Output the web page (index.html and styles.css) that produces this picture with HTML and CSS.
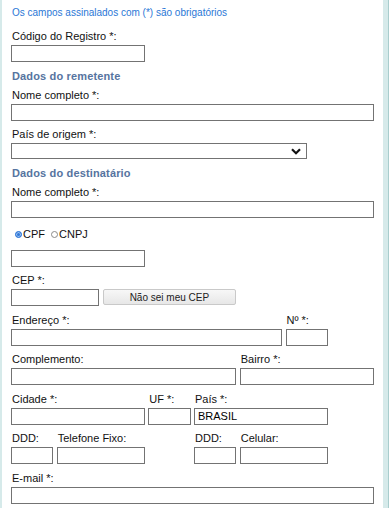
FILE: index.html
```html
<!DOCTYPE html>
<html lang="pt-BR">
<head>
    <meta charset="UTF-8">
    <meta name="viewport" content="width=device-width, initial-scale=1.0">
    <title>Registro</title>
    <link rel="stylesheet" href="styles.css">
</head>
<body>
    <div class="panel">
        <p class="note">Os campos assinalados com (*) são obrigatórios</p>

        <form class="form">
            <div class="field span3 first">
                <label>Código do Registro *:</label>
                <input type="text">
            </div>

            <h3 class="section">Dados do remetente</h3>

            <div class="field span8 first">
                <label>Nome completo *:</label>
                <input type="text">
            </div>

            <div class="field span8 first">
                <label>País de origem *:</label>
                <div class="select-wrap">
                    <select><option></option></select>
                    <svg class="chevron" width="10" height="7" viewBox="0 0 10 7"><path d="M1 1.2 L5 5.2 L9 1.2" fill="none" stroke="#111" stroke-width="2.2"/></svg>
                </div>
            </div>

            <h3 class="section">Dados do destinatário</h3>

            <div class="field span8 first">
                <label>Nome completo *:</label>
                <input type="text">
            </div>

            <div class="radios">
                <label class="radio"><input type="radio" name="doc" checked>CPF</label>
                <label class="radio"><input type="radio" name="doc">CNPJ</label>
            </div>

            <div class="field span3 first">
                <input type="text">
            </div>

            <div class="field span2 first">
                <label>CEP *:</label>
                <input type="text">
            </div>
            <button type="button" class="btn-cep">Não sei meu CEP</button>

            <div class="field span6 first">
                <label>Endereço *:</label>
                <input type="text">
            </div>
            <div class="field span1 col7">
                <label>Nº *:</label>
                <input type="text">
            </div>

            <div class="field span5 first">
                <label>Complemento:</label>
                <input type="text">
            </div>
            <div class="field span3 col6">
                <label>Bairro *:</label>
                <input type="text">
            </div>

            <div class="field span3 first">
                <label>Cidade *:</label>
                <input type="text">
            </div>
            <div class="field span1 col4">
                <label>UF *:</label>
                <input type="text">
            </div>
            <div class="field span3 col5">
                <label>País *:</label>
                <input type="text" value="BRASIL">
            </div>

            <div class="field span1 first">
                <label>DDD:</label>
                <input type="text">
            </div>
            <div class="field span2 col2">
                <label>Telefone Fixo:</label>
                <input type="text">
            </div>
            <div class="field span1 col5">
                <label>DDD:</label>
                <input type="text">
            </div>
            <div class="field span2 col6">
                <label>Celular:</label>
                <input type="text">
            </div>

            <div class="field span8 first">
                <label>E-mail *:</label>
                <input type="text">
            </div>
        </form>
    </div>
</body>
</html>
```

FILE: styles.css
```css
body {
    margin: 0;
    background: #fff;
    font-family: "Liberation Sans", Arial, sans-serif;
    color: #111;
}

.panel {
    width: 388px;
    min-height: 508px;
    box-sizing: border-box;
    padding: 7px 0 0 9px;
    border-left: 2px solid #d6eaea;
    border-right: 5px solid #d6eaea;
    box-shadow: 1px 0 0 #a9cdcd;
}

.note {
    margin: 0 0 11px 1px;
    font-size: 10px;
    line-height: 12px;
    color: #2a77d6;
}

.form {
    display: grid;
    grid-template-columns: repeat(8, 45.75px);
    row-gap: 7.5px;
}

.span1 { grid-column-end: span 1; }
.span2 { grid-column-end: span 2; }
.span3 { grid-column-end: span 3; }
.span5 { grid-column-end: span 5; }
.span6 { grid-column-end: span 6; }
.span8 { grid-column-end: span 8; }
.first { grid-column-start: 1; }
.col2 { grid-column-start: 2; }
.col4 { grid-column-start: 4; }
.col5 { grid-column-start: 5; }
.col6 { grid-column-start: 6; }
.col7 { grid-column-start: 7; }

.field label {
    display: block;
    margin: 0 0 2px 1px;
    font-size: 11px;
    line-height: 13px;
    white-space: nowrap;
}

.field input,
.field select {
    display: block;
    width: calc(100% - 3.5px);
    height: 17px;
    box-sizing: border-box;
    margin: 0;
    padding: 0 3px;
    border: 1px solid #737373;
    border-radius: 0;
    background: #fff;
    font-family: inherit;
    font-size: 11px;
    color: #000;
    outline: none;
}

.select-wrap {
    position: relative;
    width: 296px;
}

.field select {
    width: 296px;
    height: 16px;
    appearance: none;
    -webkit-appearance: none;
}

.chevron {
    position: absolute;
    right: 6px;
    top: 5px;
    pointer-events: none;
}

.section {
    grid-column: 1 / span 8;
    margin: 0 0 -1.5px 1px;
    font-size: 11px;
    line-height: 13px;
    font-weight: bold;
    color: #5674a0;
    letter-spacing: 0.15px;
}

.radios {
    grid-column: 1 / span 8;
    display: flex;
    gap: 6px;
    padding: 2.5px 0 1.5px 4px;
    font-size: 11px;
    line-height: 13px;
}

.radio {
    display: flex;
    align-items: center;
    gap: 1px;
}

.radio input {
    appearance: none;
    -webkit-appearance: none;
    width: 7px;
    height: 7px;
    margin: 0;
    border: 1px solid #8a8a8a;
    border-radius: 50%;
    background: #fff;
}

.radio input:checked {
    border-color: #2f77d8;
    background: #2f77d8;
    box-shadow: inset 0 0 0 1px #9cc2f0;
}

.btn-cep {
    grid-column: 3 / span 3;
    align-self: start;
    margin-top: 15px;
    width: calc(100% - 3.5px);
    height: 16px;
    padding: 0;
    border: 1px solid #c9c9c9;
    border-radius: 2px;
    background: linear-gradient(#f7f7f7, #e7e7e7);
    font-family: inherit;
    font-size: 10px;
    color: #222;
    cursor: pointer;
}
```
